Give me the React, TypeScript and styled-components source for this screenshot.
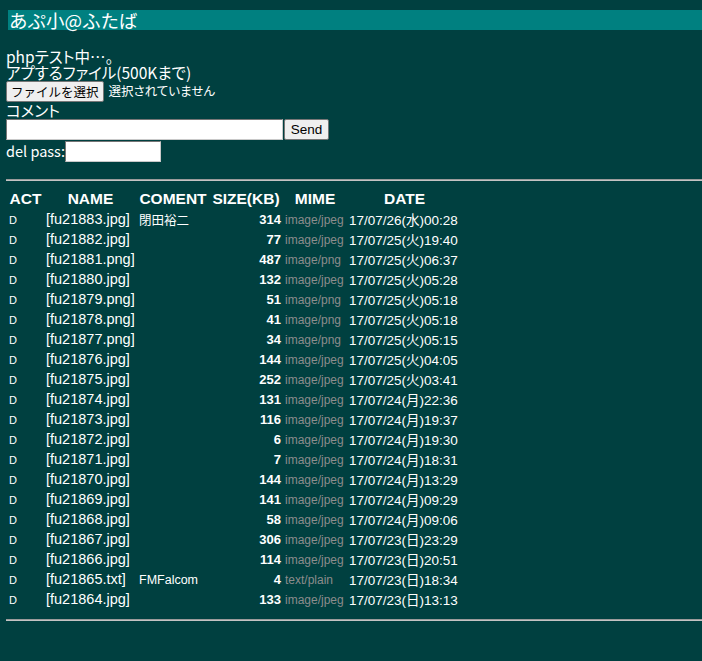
import React from "react";
import styled, { createGlobalStyle } from "styled-components";

const Global = createGlobalStyle`
  html, body {
    margin: 0;
    padding: 0;
    background: #004040;
  }
  body {
    color: #ffffff;
    font-family: "Liberation Sans", "Noto Sans CJK JP", sans-serif;
  }
`;

const Page = styled.div`
  width: 702px;
  min-height: 661px;
  box-sizing: border-box;
  padding: 10px 0 0 6px;
  background: #004040;
  overflow: hidden;
`;

const TitleBar = styled.div`
  margin-left: 2px;
  height: 20px;
  line-height: 20px;
  padding-left: 1px;
  background: #008080;
  color: #ffffff;
  font-family: "Noto Sans CJK JP", sans-serif;
  font-size: 18.5px;
  white-space: nowrap;
`;

const Form = styled.div`
  margin-top: 18px;
  display: flex;
  flex-direction: column;
  align-items: flex-start;
  font-family: "Noto Sans CJK JP", sans-serif;
  font-feature-settings: "palt";
  font-size: 15.5px;
`;

const Line = styled.div`
  height: 16px;
  line-height: 16px;
  white-space: nowrap;
`;

const Row = styled.div<{ $h: number; $gap?: number }>`
  display: flex;
  align-items: center;
  height: ${(p) => p.$h}px;
  gap: ${(p) => p.$gap ?? 0}px;
  white-space: nowrap;
`;

const NativeButton = styled.button`
  box-sizing: border-box;
  height: 21px;
  padding: 0 4px;
  margin: 0;
  background: #efefef;
  color: #000000;
  border: 1px solid #767676;
  border-radius: 2px;
  font-family: "Noto Sans CJK JP", sans-serif;
  font-size: 12.5px;
  line-height: 19px;
`;

const SendButton = styled(NativeButton)`
  width: 45px;
  padding: 0;
  font-family: "Liberation Sans", sans-serif;
  font-size: 13.5px;
`;

const FileStatus = styled.span`
  margin-left: 5px;
  font-size: 12.5px;
  line-height: 16px;
`;

const TextInput = styled.input<{ $w: number }>`
  box-sizing: border-box;
  width: ${(p) => p.$w}px;
  height: 21px;
  margin: 0;
  padding: 0 2px;
  background: #ffffff;
  border-style: solid;
  border-width: 1px;
  border-color: #767676 #c9c9c9 #c9c9c9 #767676;
  outline: none;
`;

const Label = styled.span`
  font-size: 14.5px;
  line-height: 16px;
`;

const Rule = styled.div<{ $top: number }>`
  margin-top: ${(p) => p.$top}px;
  height: 2px;
  background: #c4c4c4;
  border-top: 1px solid #9a9a9a;
  box-sizing: border-box;
`;

const Table = styled.table<{ $w: number }>`
  width: ${(p) => p.$w}px;
  margin-top: 8px;
  margin-left: 1px;
  border-collapse: separate;
  border-spacing: 0;
  table-layout: fixed;
`;

const Th = styled.th<{ $w: number }>`
  box-sizing: border-box;
  width: ${(p) => p.$w}px;
  height: 20px;
  padding: 0;
  font-size: 15.5px;
  font-weight: bold;
  text-align: center;
  vertical-align: middle;
  white-space: nowrap;
  color: #ffffff;
`;

const Td = styled.td<{ $align?: string }>`
  height: 20px;
  padding: 0 2px;
  text-align: ${(p) => p.$align ?? "left"};
  vertical-align: middle;
  white-space: nowrap;
  overflow: hidden;
`;

const Act = styled.span`
  font-size: 11px;
`;

const NameLink = styled.a`
  color: #ffffff;
  text-decoration: none;
  font-size: 14.5px;
`;

const Comment = styled.span`
  font-size: 12.5px;
`;

const Size = styled.span`
  font-size: 13px;
  font-weight: bold;
`;

const Mime = styled.span`
  font-size: 12px;
  color: #8c8c8c;
`;

const DateText = styled.span`
  font-size: 13.5px;
`;

type Item = [string, string, number, string, string];

const items: Item[] = [
  ["fu21883.jpg", "閉田裕二", 314, "image/jpeg", "17/07/26(水)00:28"],
  ["fu21882.jpg", "", 77, "image/jpeg", "17/07/25(火)19:40"],
  ["fu21881.png", "", 487, "image/png", "17/07/25(火)06:37"],
  ["fu21880.jpg", "", 132, "image/jpeg", "17/07/25(火)05:28"],
  ["fu21879.png", "", 51, "image/png", "17/07/25(火)05:18"],
  ["fu21878.png", "", 41, "image/png", "17/07/25(火)05:18"],
  ["fu21877.png", "", 34, "image/png", "17/07/25(火)05:15"],
  ["fu21876.jpg", "", 144, "image/jpeg", "17/07/25(火)04:05"],
  ["fu21875.jpg", "", 252, "image/jpeg", "17/07/25(火)03:41"],
  ["fu21874.jpg", "", 131, "image/jpeg", "17/07/24(月)22:36"],
  ["fu21873.jpg", "", 116, "image/jpeg", "17/07/24(月)19:37"],
  ["fu21872.jpg", "", 6, "image/jpeg", "17/07/24(月)19:30"],
  ["fu21871.jpg", "", 7, "image/jpeg", "17/07/24(月)18:31"],
  ["fu21870.jpg", "", 144, "image/jpeg", "17/07/24(月)13:29"],
  ["fu21869.jpg", "", 141, "image/jpeg", "17/07/24(月)09:29"],
  ["fu21868.jpg", "", 58, "image/jpeg", "17/07/24(月)09:06"],
  ["fu21867.jpg", "", 306, "image/jpeg", "17/07/23(日)23:29"],
  ["fu21866.jpg", "", 114, "image/jpeg", "17/07/23(日)20:51"],
  ["fu21865.txt", "FMFalcom", 4, "text/plain", "17/07/23(日)18:34"],
  ["fu21864.jpg", "", 133, "image/jpeg", "17/07/23(日)13:13"],
];

const columns: [string, number][] = [
  ["ACT", 37],
  ["NAME", 93],
  ["COMENT", 72],
  ["SIZE(KB)", 74],
  ["MIME", 64],
  ["DATE", 115],
];

const tableWidth = columns.reduce((sum, [, w]) => sum + w, 0);

export default function App() {
  return (
    <>
      <Global />
      <Page>
        <TitleBar>あぷ小@ふたば</TitleBar>
        <Form>
          <Line>phpテスト中…。</Line>
          <Line>アプするファイル(500Kまで)</Line>
          <Row $h={22}>
            <NativeButton>ファイルを選択</NativeButton>
            <FileStatus>選択されていません</FileStatus>
          </Row>
          <Line>コメント</Line>
          <Row $h={22} $gap={1}>
            <TextInput $w={277} type="text" />
            <SendButton>Send</SendButton>
          </Row>
          <Row $h={22}>
            <Label>del pass:</Label>
            <TextInput $w={96} type="password" />
          </Row>
        </Form>
        <Rule $top={17} />
        <Table $w={tableWidth}>
          <thead>
            <tr>
              {columns.map(([label, w]) => (
                <Th key={label} $w={w}>
                  {label}
                </Th>
              ))}
            </tr>
          </thead>
          <tbody>
            {items.map(([name, comment, size, mime, date]) => (
              <tr key={name}>
                <Td>
                  <Act>D</Act>
                </Td>
                <Td>
                  <NameLink href="#">[{name}]</NameLink>
                </Td>
                <Td>
                  <Comment>{comment}</Comment>
                </Td>
                <Td $align="right">
                  <Size>{size}</Size>
                </Td>
                <Td>
                  <Mime>{mime}</Mime>
                </Td>
                <Td>
                  <DateText>{date}</DateText>
                </Td>
              </tr>
            ))}
          </tbody>
        </Table>
        <Rule $top={10} />
      </Page>
    </>
  );
}
